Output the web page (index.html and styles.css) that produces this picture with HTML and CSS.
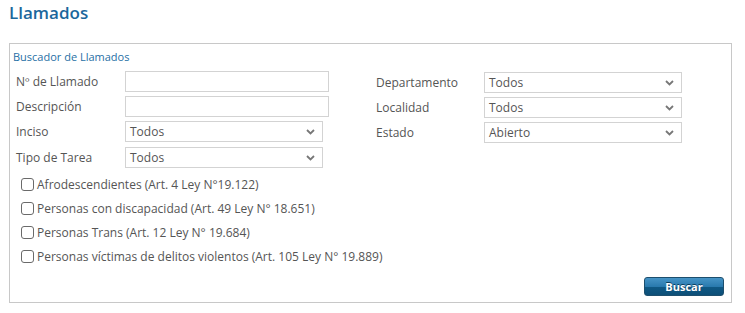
FILE: index.html
```html
<!DOCTYPE html>
<html>
<head>
	<meta charset="UTF-8">
	<title>Llamados</title>
	<link rel="stylesheet" href="styles.css">
</head>
<body>
	<h1 class="title">Llamados</h1>
	<div class="buscador">
		<div class="legend">Buscador de Llamados</div>
		<div class="campos">
			<div class="col">
				<div class="fila">
					<label class="lbl">Nº de Llamado</label>
					<input type="text" class="txt">
				</div>
				<div class="fila">
					<label class="lbl">Descripción</label>
					<input type="text" class="txt">
				</div>
				<div class="fila">
					<label class="lbl">Inciso</label>
					<div class="sel"><span>Todos</span><svg width="9" height="6" viewBox="0 0 9 6"><path d="M1 1l3.5 3.5L8 1" fill="none" stroke="#777" stroke-width="1.8"/></svg></div>
				</div>
				<div class="fila">
					<label class="lbl">Tipo de Tarea</label>
					<div class="sel"><span>Todos</span><svg width="9" height="6" viewBox="0 0 9 6"><path d="M1 1l3.5 3.5L8 1" fill="none" stroke="#777" stroke-width="1.8"/></svg></div>
				</div>
			</div>
			<div class="col col-der">
				<div class="fila">
					<label class="lbl">Departamento</label>
					<div class="sel"><span>Todos</span><svg width="9" height="6" viewBox="0 0 9 6"><path d="M1 1l3.5 3.5L8 1" fill="none" stroke="#777" stroke-width="1.8"/></svg></div>
				</div>
				<div class="fila">
					<label class="lbl">Localidad</label>
					<div class="sel"><span>Todos</span><svg width="9" height="6" viewBox="0 0 9 6"><path d="M1 1l3.5 3.5L8 1" fill="none" stroke="#777" stroke-width="1.8"/></svg></div>
				</div>
				<div class="fila">
					<label class="lbl">Estado</label>
					<div class="sel"><span>Abierto</span><svg width="9" height="6" viewBox="0 0 9 6"><path d="M1 1l3.5 3.5L8 1" fill="none" stroke="#777" stroke-width="1.8"/></svg></div>
				</div>
			</div>
		</div>
		<div class="checks">
			<label class="chk"><input type="checkbox">Afrodescendientes (Art. 4 Ley N°19.122)</label>
			<label class="chk"><input type="checkbox">Personas con discapacidad (Art. 49 Ley N° 18.651)</label>
			<label class="chk"><input type="checkbox">Personas Trans (Art. 12 Ley N° 19.684)</label>
			<label class="chk"><input type="checkbox">Personas víctimas de delitos violentos (Art. 105 Ley N° 19.889)</label>
		</div>
		<div class="acciones">
			<button class="btn">Buscar</button>
		</div>
	</div>
</body>
</html>
```

FILE: styles.css
```css
body{
	margin: 0;
	padding: 0 9px;
	background: #fff;
	font-family: "Open Sans", "Noto Sans", sans-serif;
	color: #555;
}
.title{
	margin: 0;
	height: 43px;
	padding-top: 1px;
	box-sizing: border-box;
	font-size: 17px;
	font-weight: 600;
	line-height: 24px;
	color: #1b679c;
}
.buscador{
	width: 723px;
	height: 260px;
	box-sizing: border-box;
	border: 1px solid #c8c8c8;
	padding: 0 7px 0 6px;
	display: flex;
	flex-direction: column;
}
.legend{
	font-size: 11px;
	line-height: 16px;
	margin: 5px 0 0 -3px;
	color: #1f6fa5;
}
.campos{
	display: flex;
	margin-top: 6px;
}
.col{
	width: 360px;
	flex-shrink: 0;
	display: flex;
	flex-direction: column;
	gap: 4px;
}
.col-der{
	width: auto;
	flex: 1;
	margin-top: 1px;
}
.fila{
	display: flex;
	align-items: center;
	height: 21px;
}
.col .fila:nth-child(4){
	margin-top: 1px;
}
.lbl{
	width: 109px;
	flex-shrink: 0;
	font-size: 12px;
	color: #555;
}
.col-der .lbl{
	width: 108px;
}
.txt{
	width: 204px;
	height: 21px;
	box-sizing: border-box;
	border: 1px solid #d3d3d3;
	margin: 0;
	padding: 0 4px;
	font: 12px "Open Sans", sans-serif;
}
.sel{
	width: 198px;
	height: 21px;
	box-sizing: border-box;
	border: 1px solid #d3d3d3;
	padding: 0 4px;
	display: flex;
	align-items: center;
	justify-content: space-between;
	font-size: 12px;
	color: #555;
}
.sel svg{
	margin-right: 3px;
}
.checks{
	margin-top: 4px;
	display: flex;
	flex-direction: column;
}
.chk{
	height: 24px;
	display: flex;
	align-items: center;
	font-size: 12px;
	padding-left: 5px;
	color: #555;
}
.chk input{
	appearance: none;
	-webkit-appearance: none;
	width: 13px;
	height: 13px;
	margin: 0 3px 0 0;
	border: 1px solid #6a6a6a;
	border-radius: 3px;
	background: #fff;
}
.acciones{
	margin-top: auto;
	margin-bottom: 6px;
	display: flex;
	justify-content: flex-end;
}
.btn{
	width: 80px;
	height: 19px;
	border: 1px solid #1d4f6e;
	border-radius: 3px;
	background: linear-gradient(#4694c6, #2a7aae 50%, #0f5985 51%, #0d4f78);
	color: #fff;
	font: bold 11px "Open Sans", sans-serif;
	text-shadow: 0 -1px 0 #0a3c5c;
	padding: 0;
}
```
